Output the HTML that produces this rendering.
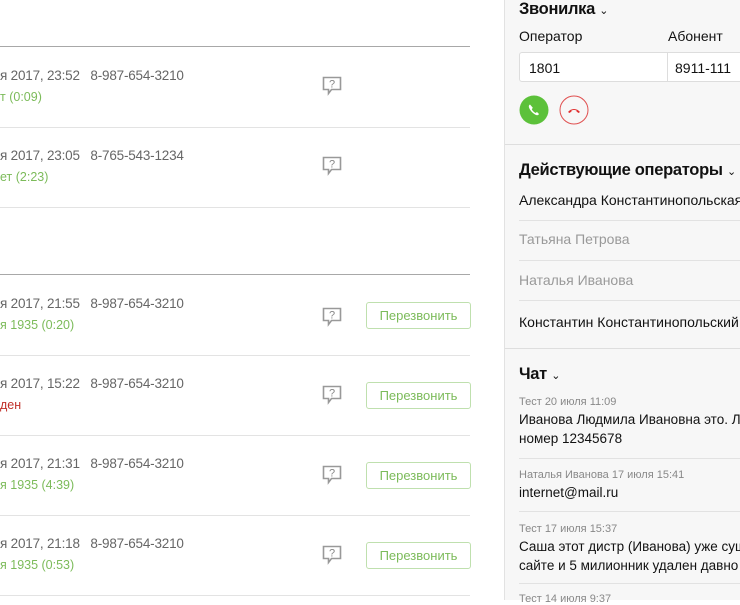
<!DOCTYPE html>
<html><head><meta charset="utf-8"><style>
*{margin:0;padding:0;box-sizing:border-box}
body{width:740px;height:600px;overflow:hidden;background:#fff;font-family:"Liberation Sans","Noto Sans CJK SC",sans-serif;position:relative;color:#222}
.a{position:absolute;white-space:nowrap}
.l{position:absolute;left:0;width:470px;height:1px;background:#e3e3e3}
.d{background:#a8a8a8}
.t{font-size:13.5px;color:#666;letter-spacing:-0.2px}
.g{font-size:12.5px;color:#7cbb5a}
.r{font-size:12.5px;color:#c0302a}
.btn{position:absolute;left:366px;width:105px;height:27px;border:1px solid #bfe0ae;border-radius:3px;color:#7cbb5a;font-size:13px;text-align:center;line-height:25px}
.ic{position:absolute;left:322px;width:20px;height:20px}
#p{position:absolute;left:504px;top:0;width:236px;height:600px;background:#f7f7f7;border-left:1px solid #e2e2e2}
.h{font-size:16.5px;font-weight:bold;color:#111;letter-spacing:-0.3px}
.n{font-size:14px;color:#111}
.ng{font-size:14px;color:#999}
.m{font-size:11px;color:#888}
.pl{position:absolute;left:14px;width:222px;height:1px;background:#e2e2e2}
.pf{position:absolute;left:0;width:236px;height:1px;background:#dedede}
</style></head><body>
<div class="l d" style="top:46px"></div>

<div class="a t" style="left:0;top:68px">я 2017, 23:52&nbsp;&nbsp;&nbsp;8-987-654-3210</div>
<div class="a g" style="left:0;top:90px">т (0:09)</div>
<div class="l" style="top:127px"></div>
<div class="a t" style="left:0;top:148px">я 2017, 23:05&nbsp;&nbsp;&nbsp;8-765-543-1234</div>
<div class="a g" style="left:0;top:170px">ет (2:23)</div>
<div class="l" style="top:207px"></div>
<div class="l d" style="top:274px"></div>

<div class="a t" style="left:0;top:296px">я 2017, 21:55&nbsp;&nbsp;&nbsp;8-987-654-3210</div>
<div class="a g" style="left:0;top:318px">я 1935 (0:20)</div>
<div class="l" style="top:355px"></div>
<div class="a t" style="left:0;top:376px">я 2017, 15:22&nbsp;&nbsp;&nbsp;8-987-654-3210</div>
<div class="a r" style="left:0;top:398px">ден</div>
<div class="l" style="top:435px"></div>
<div class="a t" style="left:0;top:456px">я 2017, 21:31&nbsp;&nbsp;&nbsp;8-987-654-3210</div>
<div class="a g" style="left:0;top:478px">я 1935 (4:39)</div>
<div class="l" style="top:515px"></div>
<div class="a t" style="left:0;top:536px">я 2017, 21:18&nbsp;&nbsp;&nbsp;8-987-654-3210</div>
<div class="a g" style="left:0;top:558px">я 1935 (0:53)</div>
<div class="l" style="top:595px"></div>

<svg class="ic" style="top:76px" viewBox="0 0 20 20"><path d="M1.5 1.5h17v12h-9l-3 4v-4h-5z" fill="none" stroke="#999" stroke-width="1.6"/><text x="10" y="11.5" font-size="11" fill="#888" text-anchor="middle" font-family="Liberation Sans">?</text></svg>
<svg class="ic" style="top:156px" viewBox="0 0 20 20"><path d="M1.5 1.5h17v12h-9l-3 4v-4h-5z" fill="none" stroke="#999" stroke-width="1.6"/><text x="10" y="11.5" font-size="11" fill="#888" text-anchor="middle" font-family="Liberation Sans">?</text></svg>
<svg class="ic" style="top:307px" viewBox="0 0 20 20"><path d="M1.5 1.5h17v12h-9l-3 4v-4h-5z" fill="none" stroke="#999" stroke-width="1.6"/><text x="10" y="11.5" font-size="11" fill="#888" text-anchor="middle" font-family="Liberation Sans">?</text></svg>
<svg class="ic" style="top:385px" viewBox="0 0 20 20"><path d="M1.5 1.5h17v12h-9l-3 4v-4h-5z" fill="none" stroke="#999" stroke-width="1.6"/><text x="10" y="11.5" font-size="11" fill="#888" text-anchor="middle" font-family="Liberation Sans">?</text></svg>
<svg class="ic" style="top:465px" viewBox="0 0 20 20"><path d="M1.5 1.5h17v12h-9l-3 4v-4h-5z" fill="none" stroke="#999" stroke-width="1.6"/><text x="10" y="11.5" font-size="11" fill="#888" text-anchor="middle" font-family="Liberation Sans">?</text></svg>
<svg class="ic" style="top:545px" viewBox="0 0 20 20"><path d="M1.5 1.5h17v12h-9l-3 4v-4h-5z" fill="none" stroke="#999" stroke-width="1.6"/><text x="10" y="11.5" font-size="11" fill="#888" text-anchor="middle" font-family="Liberation Sans">?</text></svg>

<div class="btn" style="top:302px">Перезвонить</div>
<div class="btn" style="top:382px">Перезвонить</div>
<div class="btn" style="top:462px">Перезвонить</div>
<div class="btn" style="top:542px">Перезвонить</div>

<div id="p">
<div class="a h" style="left:14px;top:0">Звонилка <span style="font-weight:normal;font-size:11px">⌄</span></div>
<div class="a n" style="left:14px;top:28px">Оператор</div>
<div class="a n" style="left:163px;top:28px">Абонент</div>
<div class="a" style="left:14px;top:52px;width:260px;height:30px;background:#fff;border:1px solid #ddd;border-radius:3px"></div>
<div class="a" style="left:162px;top:52px;width:1px;height:30px;background:#ddd"></div>
<div class="a n" style="left:24px;top:60px">1801</div>
<div class="a n" style="left:170px;top:60px">8911-111</div>
<svg class="a" style="left:14px;top:95px" width="30" height="30" viewBox="0 0 30 30"><circle cx="15" cy="15" r="14.5" fill="#5cc13a"/><path d="M11 9.5c-1 .5-1.5 1.5-1 3 1 3 4 6 7 7.5 1.5.5 2.5 0 3-1l-2-2-1.5 1c-1.5-.7-3-2.2-3.7-3.7l1-1.5z" fill="#fff"/></svg>
<svg class="a" style="left:54px;top:95px" width="30" height="30" viewBox="0 0 30 30"><circle cx="15" cy="15" r="14" fill="none" stroke="#e05050" stroke-width="1"/><path d="M9 17c3-4 9-4 12 0l-1.5 1-2-1.5v-1c-2-.6-3-.6-5 0v1l-2 1.5z" fill="#e03030"/></svg>
<div class="pf" style="top:144px"></div>
<div class="a h" style="left:14px;top:161px">Действующие операторы <span style="font-weight:normal;font-size:11px">⌄</span></div>
<div class="a n" style="left:14px;top:192px">Александра Константинопольская</div>
<div class="pl" style="top:220px"></div>
<div class="a ng" style="left:14px;top:231px">Татьяна Петрова</div>
<div class="pl" style="top:260px"></div>
<div class="a ng" style="left:14px;top:272px">Наталья Иванова</div>
<div class="pl" style="top:300px"></div>
<div class="a n" style="left:14px;top:314px">Константин Константинопольский</div>
<div class="pf" style="top:348px"></div>
<div class="a h" style="left:14px;top:365px">Чат <span style="font-weight:normal;font-size:11px">⌄</span></div>
<div class="a m" style="left:14px;top:396px">Тест 20 июля 11:09</div>
<div class="a n" style="left:14px;top:412px;font-size:13.5px">Иванова Людмила Ивановна это. Лич</div>
<div class="a n" style="left:14px;top:431px;font-size:13.5px">номер 12345678</div>
<div class="pl" style="top:458px"></div>
<div class="a m" style="left:14px;top:469px">Наталья Иванова 17 июля 15:41</div>
<div class="a n" style="left:14px;top:485px;font-size:13.5px">internet@mail.ru</div>
<div class="pl" style="top:511px"></div>
<div class="a m" style="left:14px;top:523px">Тест 17 июля 15:37</div>
<div class="a n" style="left:14px;top:539px;font-size:13.5px">Саша этот дистр (Иванова) уже сущес</div>
<div class="a n" style="left:14px;top:558px;font-size:13.5px">сайте и 5 милионник удален давно</div>
<div class="pl" style="top:583px"></div>
<div class="a m" style="left:14px;top:593px">Тест 14 июля 9:37</div>
</div>
</body></html>
